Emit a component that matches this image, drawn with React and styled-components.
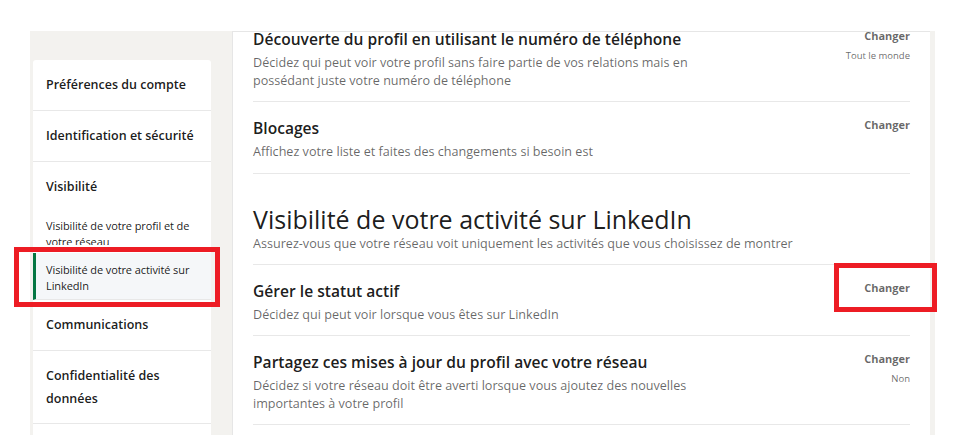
import React from "react";
import styled, { createGlobalStyle } from "styled-components";

const GlobalStyle = createGlobalStyle`
  body {
    margin: 0;
    background: #fff;
    font-family: "Open Sans", "Noto Sans", sans-serif;
  }
`;

const Page = styled.div`
  position: relative;
  width: 968px;
  height: 435px;
  overflow: hidden;
  padding-top: 31px;
  box-sizing: border-box;
`;

const Shell = styled.div`
  display: flex;
  margin-left: 30px;
  width: 905px;
  height: 404px;
  background: #f3f2ef;
  padding: 0 5px 0 3px;
  box-sizing: border-box;
`;

const SideCol = styled.div`
  width: 178px;
  padding-top: 29px;
  margin-right: 21px;
  flex-shrink: 0;
`;

const Card = styled.nav`
  background: #fff;
  border-radius: 3px 3px 0 0;
  height: 100%;
`;

const NavItem = styled.div`
  padding: 13px 13px;
  font-size: 12.5px;
  font-weight: 600;
  line-height: ${(p) => p.$lh || "24px"};
  color: rgba(0, 0, 0, 0.9);
  border-bottom: ${(p) => (p.$noline ? "none" : "1px solid #e8e8e8")};
`;

const SubItem = styled.div`
  height: ${(p) => p.$h};
  overflow: hidden;
  box-sizing: border-box;
  padding: ${(p) => p.$pad} 13px 0 ${(p) => (p.$active ? "10px" : "13px")};
  font-size: 11px;
  letter-spacing: -0.1px;
  line-height: 16px;
  color: rgba(0, 0, 0, 0.9);
  background: ${(p) => (p.$active ? "#f5f7f9" : "#fff")};
  border-left: ${(p) => (p.$active ? "3px solid #057642" : "none")};
  border-bottom: ${(p) => (p.$active ? "1px solid #e8e8e8" : "none")};
  margin-top: ${(p) => p.$mt || "0"};
`;

const Main = styled.main`
  flex: 1;
  background: #fff;
  border-left: 1px solid #e6e6e6;
  border-top: 1px solid #e6e6e6;
  overflow: hidden;
  padding: 0 20px 0 20px;
`;

const Scroller = styled.div`
  margin-top: -19px;
`;

const Row = styled.section`
  display: flex;
  justify-content: space-between;
  align-items: flex-start;
  padding: 14px 0 12px;
  border-bottom: 1px solid #e8e8e8;
`;

const RowText = styled.div`
  max-width: 470px;
`;

const Title = styled.h3`
  margin: 0;
  font-size: 15.6px;
  font-weight: 600;
  line-height: 24px;
  color: rgba(0, 0, 0, 0.9);
`;

const Desc = styled.p`
  margin: 3px 0 0;
  font-size: 12.6px;
  line-height: 17.5px;
  color: rgba(0, 0, 0, 0.6);
`;

const Actions = styled.div`
  display: flex;
  flex-direction: column;
  align-items: flex-end;
`;

const ChangeBtn = styled.button`
  border: none;
  background: none;
  padding: 0;
  font-family: inherit;
  font-size: 11px;
  font-weight: 700;
  line-height: 18px;
  color: rgba(0, 0, 0, 0.6);
`;

const Value = styled.span`
  margin-top: 4px;
  font-size: 9.5px;
  line-height: 14px;
  color: rgba(0, 0, 0, 0.6);
`;

const SectionHead = styled.header`
  padding: 29px 0 11px;
  border-bottom: 1px solid #e8e8e8;
`;

const SectionTitle = styled.h2`
  margin: 0;
  font-size: 25px;
  font-weight: 400;
  line-height: 32px;
  color: rgba(0, 0, 0, 0.9);
`;

const SectionSub = styled.p`
  margin: 0;
  font-size: 12.6px;
  line-height: 18px;
  color: rgba(0, 0, 0, 0.6);
`;

const Highlight = styled.div`
  position: absolute;
  left: ${(p) => p.$x}px;
  top: ${(p) => p.$y}px;
  width: ${(p) => p.$w}px;
  height: ${(p) => p.$h}px;
  border: 5px solid #ed1c24;
  box-sizing: border-box;
  pointer-events: none;
`;

const rows = [
  {
    title: "Découverte du profil en utilisant le numéro de téléphone",
    desc: "Décidez qui peut voir votre profil sans faire partie de vos relations mais en possédant juste votre numéro de téléphone",
    value: "Tout le monde",
  },
  {
    title: "Blocages",
    desc: "Affichez votre liste et faites des changements si besoin est",
  },
];

const activityRows = [
  {
    title: "Gérer le statut actif",
    desc: "Décidez qui peut voir lorsque vous êtes sur LinkedIn",
  },
  {
    title: "Partagez ces mises à jour du profil avec votre réseau",
    desc: "Décidez si votre réseau doit être averti lorsque vous ajoutez des nouvelles importantes à votre profil",
    value: "Non",
  },
];

function SettingRow({ title, desc, value }) {
  return (
    <Row>
      <RowText>
        <Title>{title}</Title>
        <Desc>{desc}</Desc>
      </RowText>
      <Actions>
        <ChangeBtn>Changer</ChangeBtn>
        {value && <Value>{value}</Value>}
      </Actions>
    </Row>
  );
}

export default function App() {
  return (
    <>
      <GlobalStyle />
      <Page>
        <Shell>
          <SideCol>
            <Card>
              <NavItem>Préférences du compte</NavItem>
              <NavItem>Identification et sécurité</NavItem>
              <NavItem $noline>Visibilité</NavItem>
              <SubItem $h="33px" $pad="6px">
                Visibilité de votre profil et de votre réseau
              </SubItem>
              <SubItem $active $h="47px" $pad="9px" $mt="8px">
                Visibilité de votre activité sur LinkedIn
              </SubItem>
              <NavItem>Communications</NavItem>
              <NavItem $lh="23px">Confidentialité des données</NavItem>
            </Card>
          </SideCol>
          <Main>
            <Scroller>
              {rows.map((r) => (
                <SettingRow key={r.title} {...r} />
              ))}
              <SectionHead>
                <SectionTitle>Visibilité de votre activité sur LinkedIn</SectionTitle>
                <SectionSub>
                  Assurez-vous que votre réseau voit uniquement les activités que vous choisissez de montrer
                </SectionSub>
              </SectionHead>
              {activityRows.map((r) => (
                <SettingRow key={r.title} {...r} />
              ))}
            </Scroller>
          </Main>
        </Shell>
        <Highlight $x={14} $y={247} $w={206} $h={60} />
        <Highlight $x={834} $y={263} $w={103} $h={49} />
      </Page>
    </>
  );
}
